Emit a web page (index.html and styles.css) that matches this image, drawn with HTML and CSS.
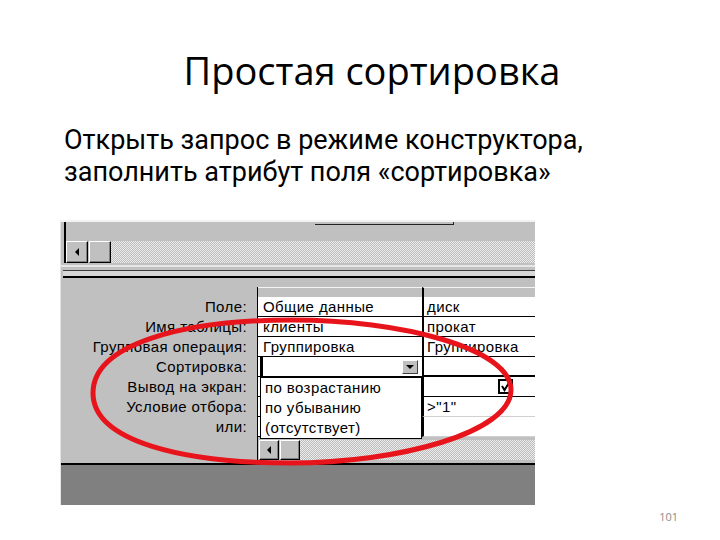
FILE: index.html
```html
<!DOCTYPE html>
<html lang="ru">
<head>
<meta charset="utf-8">
<title>Простая сортировка</title>
<link rel="stylesheet" href="styles.css">
</head>
<body>
<div class="slide">
  <h1 class="title">Простая сортировка</h1>
  <p class="lead">Открыть запрос в режиме конструктора,<br>заполнить атрибут поля «сортировка»</p>
  <div class="shot">
    <div class="pane">
      <div class="pane-top"><div class="fieldlist"></div></div>
      <div class="scroll scroll-top">
        <div class="btn arrow"><span class="tri-left"></span></div>
        <div class="btn thumb"></div>
        <div class="track"></div>
      </div>
    </div>
    <div class="split-gap"></div>
    <div class="splitter"></div>
    <div class="designer">
      <div class="labels">
        <div class="label">Поле:</div>
        <div class="label">Имя таблицы:</div>
        <div class="label">Групповая операция:</div>
        <div class="label">Сортировка:</div>
        <div class="label">Вывод на экран:</div>
        <div class="label">Условие отбора:</div>
        <div class="label">или:</div>
      </div>
      <div class="grid">
        <div class="head"></div><div class="head h2"></div>
        <div class="cell c1">Общие данные</div><div class="cell c2">диск</div>
        <div class="cell c1">клиенты</div><div class="cell c2">прокат</div>
        <div class="cell c1">Группировка</div><div class="cell c2">Группировка</div>
        <div class="cell c1 sort">
          <span class="caret"></span>
          <span class="ddbtn"><span class="tri-down"></span></span>
          <div class="dropdown">
            <div class="opt">по возрастанию</div>
            <div class="opt">по убыванию</div>
            <div class="opt">(отсутствует)</div>
          </div>
        </div><div class="cell c2 thick"></div>
        <div class="cell c1"></div><div class="cell c2"><span class="check"><svg width="11" height="11" viewBox="0 0 11 11"><path d="M2 5 L4.5 9 L9.5 1" fill="none" stroke="#000" stroke-width="2"/></svg></span></div>
        <div class="cell c1"></div><div class="cell c2 faint">&gt;"1"</div>
        <div class="cell c1"></div><div class="cell c2 faint"></div>
        <div class="scroll scroll-bottom">
          <div class="btn arrow"><span class="tri-left"></span></div>
          <div class="btn thumb"></div>
          <div class="track"></div>
        </div>
      </div>
    </div>
    <div class="status"></div>
    <svg class="ring" width="475" height="285" viewBox="0 0 475 285">
      <path d="M32,171 C32,122 122,98 231,98 C339,98 450,126 450,168 C450,210 339,241 229,241 C124,241 32,220 32,171 Z" fill="none" stroke="#e8141c" stroke-width="5"/>
    </svg>
  </div>
  <div class="pagenum">101</div>
</div>
</body>
</html>
```
FILE: styles.css
```css
* { box-sizing: border-box; }
html, body { margin: 0; padding: 0; background: #fff; }
.slide {
  width: 720px;
  height: 540px;
  overflow: hidden;
  background: #fff;
  color: #000;
  font-family: "Open Sans", "Noto Sans", sans-serif;
}
.title {
  margin: 0;
  padding: 48px 0 0 24px;
  font-size: 38px;
  font-weight: 400;
  line-height: 44px;
  text-align: center;
}
.lead {
  margin: 32px 0 0 64px;
  font-family: Roboto, "Open Sans", sans-serif;
  font-size: 27px;
  line-height: 32px;
}
.shot {
  position: relative;
  margin: 32px 0 0 60px;
  width: 475px;
  height: 285px;
  background: #c0c0c0;
  border-left: 1px solid #e4e4e4;
  border-top: 2px solid #f2f2f2;
  overflow: hidden;
  font-family: "Liberation Sans", Arial, sans-serif;
  font-size: 15px;
  line-height: 19px;
  letter-spacing: 0.4px;
}
.pane {
  margin-left: 3px;
  border-left: 2px solid #000;
}
.pane-top { height: 19px; }
.fieldlist {
  margin-left: 249px;
  width: 139px;
  height: 3px;
  border-bottom: 1px solid #222;
  border-right: 1px solid #222;
}
.scroll { display: flex; }
.scroll-top { height: 22px; }
.scroll-top .btn { width: 22px; }
.btn {
  display: flex;
  align-items: center;
  justify-content: center;
  background: #c0c0c0;
  border: 1px solid;
  border-color: #fff #000 #000 #fff;
  box-shadow: inset -1px -1px #808080;
}
.thumb { margin-left: 1px; }
.track {
  flex: 1;
  background-color: #d4d4d4;
  background-image: repeating-conic-gradient(#bcbcbc 0 25%, #ececec 0 50%);
  background-size: 2px 2px;
}
.tri-left {
  width: 0;
  height: 0;
  border-right: 4px solid #000;
  border-top: 4px solid transparent;
  border-bottom: 4px solid transparent;
}
.tri-down {
  width: 0;
  height: 0;
  border-top: 4px solid #000;
  border-left: 4px solid transparent;
  border-right: 4px solid transparent;
}
.split-gap {
  height: 5px;
  margin-top: 2px;
  border-top: 2px solid #e6e6e6;
}
.splitter {
  height: 8px;
  margin-left: 2px;
  background: #d8d8d8;
  border-top: 1px solid #404040;
  border-bottom: 2px solid #000;
}
.designer {
  display: flex;
  height: 185px;
  padding-top: 9px;
}
.labels {
  width: 196px;
  padding-top: 10px;
}
.label {
  height: 20px;
  line-height: 20px;
  text-align: right;
  padding-right: 10px;
  white-space: nowrap;
}
.grid {
  flex: 1;
  align-self: flex-start;
  display: grid;
  grid-template-columns: 164px 1fr;
  grid-template-rows: 10px repeat(7, 20px) 23px;
  border-left: 1px solid #000;
}
.head {
  background: #c0c0c0;
  border-top: 1px solid #f4f4f4;
}
.h2 { border-left: 2px solid #000; }
.cell {
  background: #fff;
  border-bottom: 1px solid #000;
  padding-left: 5px;
  line-height: 19px;
  white-space: nowrap;
}
.c2 {
  border-left: 2px solid #000;
  padding-left: 3px;
}
.thick { border-bottom: 2px solid #000; }
.faint { border-bottom: 1px solid #d0d0d0; }
.sort {
  position: relative;
  display: flex;
  align-items: center;
  padding-left: 2px;
}
.caret {
  width: 3px;
  height: 19px;
  background: #000;
}
.ddbtn {
  margin-left: auto;
  margin-right: 4px;
  width: 16px;
  height: 14px;
  display: flex;
  align-items: center;
  justify-content: center;
  background: #c0c0c0;
  border: 1px solid;
  border-color: #fff #404040 #404040 #fff;
}
.dropdown {
  position: absolute;
  left: 2px;
  top: 20px;
  width: 162px;
  height: 62px;
  background: #fff;
  border: 1px solid #000;
  z-index: 2;
}
.opt {
  height: 20px;
  line-height: 20px;
  padding-left: 4px;
  white-space: nowrap;
}
.check {
  display: inline-flex;
  align-items: center;
  justify-content: center;
  margin: 2px 0 0 71px;
  width: 15px;
  height: 15px;
  border: 2px solid #000;
  vertical-align: top;
}
.scroll-bottom {
  grid-column: 1 / 3;
  height: 20px;
  margin-top: 3px;
  margin-left: 1px;
}
.scroll-bottom .btn { width: 20px; }
.status {
  height: 42px;
  border-top: 2px solid #000;
  background: #808080;
}
.ring {
  position: absolute;
  left: 0;
  top: 0;
  z-index: 3;
  pointer-events: none;
}
.pagenum {
  margin-top: 5px;
  padding-right: 42px;
  text-align: right;
  font-size: 11px;
  line-height: 14px;
  color: #8a8a8a;
}
```
